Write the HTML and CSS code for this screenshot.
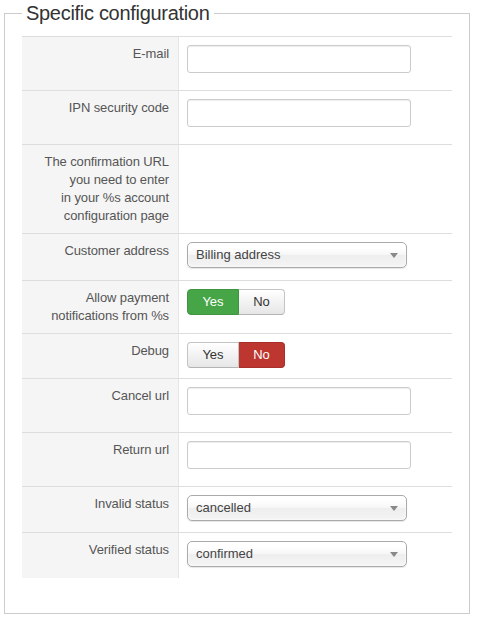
FILE: index.html
```html
<!DOCTYPE html>
<html>
<head>
<meta charset="utf-8">
<link rel="stylesheet" href="styles.css">
</head>
<body>
<fieldset class="config">
  <legend class="config-legend">Specific configuration</legend>
  <div class="form-table">
    <div class="row">
      <div class="label">E-mail</div>
      <div class="value"><input class="text-input" type="text"></div>
    </div>
    <div class="row">
      <div class="label">IPN security code</div>
      <div class="value"><input class="text-input" type="text"></div>
    </div>
    <div class="row">
      <div class="label">The confirmation URL<br>you need to enter<br>in your %s account<br>configuration page</div>
      <div class="value"></div>
    </div>
    <div class="row">
      <div class="label">Customer address</div>
      <div class="value"><div class="select">Billing address<span class="arrow"></span></div></div>
    </div>
    <div class="row">
      <div class="label">Allow payment<br>notifications from %s</div>
      <div class="value">
        <div class="toggle">
          <span class="btn btn-yes active-yes">Yes</span><span class="btn btn-no">No</span>
        </div>
      </div>
    </div>
    <div class="row">
      <div class="label">Debug</div>
      <div class="value">
        <div class="toggle">
          <span class="btn btn-yes">Yes</span><span class="btn btn-no active-no">No</span>
        </div>
      </div>
    </div>
    <div class="row">
      <div class="label">Cancel url</div>
      <div class="value"><input class="text-input" type="text"></div>
    </div>
    <div class="row">
      <div class="label">Return url</div>
      <div class="value"><input class="text-input" type="text"></div>
    </div>
    <div class="row">
      <div class="label">Invalid status</div>
      <div class="value"><div class="select select-status">cancelled<span class="arrow"></span></div></div>
    </div>
    <div class="row">
      <div class="label">Verified status</div>
      <div class="value"><div class="select select-status">confirmed<span class="arrow"></span></div></div>
    </div>
  </div>
</fieldset>
</body>
</html>
```
FILE: styles.css
```css
html, body {
  margin: 0;
  padding: 0;
  background: #fff;
}
body {
  font-family: "Liberation Sans", Arial, sans-serif;
  font-size: 13px;
  line-height: 18px;
  color: #333;
}
.config {
  margin: 0 0 0 4px;
  width: 466px;
  box-sizing: border-box;
  border: 1px solid #cccccc;
  padding: 10px 17px 35px 17px;
}
.config-legend {
  font-size: 20px;
  letter-spacing: -0.3px;
  line-height: 26px;
  color: #333;
  padding: 0 4px;
}
.form-table {
  width: 430px;
}
.row {
  display: grid;
  grid-template-columns: 157px 273px;
  border-top: 1px solid #dddddd;
}
.label {
  background: #f5f5f5;
  border-right: 1px solid #e6e6e6;
  padding: 8px 9px 8px 8px;
  text-align: right;
  color: #555;
  letter-spacing: -0.1px;
}
.value {
  padding: 8px 8px 8px 8px;
}
.text-input {
  display: block;
  box-sizing: border-box;
  width: 224px;
  height: 28px;
  margin: 0 0 9px 0;
  padding: 4px 6px;
  border: 1px solid #cccccc;
  border-radius: 3px;
  box-shadow: inset 0 1px 1px rgba(0,0,0,0.075);
  background: #fff;
  font-family: inherit;
  font-size: 13px;
}
.select {
  position: relative;
  box-sizing: border-box;
  width: 220px;
  height: 26px;
  margin-bottom: 4px;
  padding: 0 0 0 8px;
  border: 1px solid #aaaaaa;
  border-radius: 5px;
  background: linear-gradient(#ffffff 20%, #f6f6f6 50%, #eeeeee 52%, #f4f4f4 100%);
  box-shadow: 0 0 3px #fff inset, 0 1px 1px rgba(0,0,0,0.1);
  line-height: 24px;
  color: #444;
}
.select-status {
  margin-bottom: 3px;
}
.arrow {
  position: absolute;
  right: 8px;
  top: 10px;
  width: 0;
  height: 0;
  border-left: 4px solid transparent;
  border-right: 4px solid transparent;
  border-top: 5px solid #888;
}
.toggle {
  display: flex;
  margin-bottom: 2px;
}
.btn {
  box-sizing: border-box;
  height: 26px;
  line-height: 24px;
  text-align: center;
  border: 1px solid #c4c4c4;
  border-bottom-color: #b3b3b3;
  background: linear-gradient(#ffffff, #e6e6e6);
  color: #333;
  font-size: 13px;
}
.btn-yes {
  width: 52px;
  border-radius: 4px 0 0 4px;
}
.btn-no {
  width: 46px;
  border-left: 0;
  border-radius: 0 4px 4px 0;
}
.active-yes {
  background: #46a546;
  border-color: #3f953f;
  color: #fff;
}
.active-no {
  background: #bd362f;
  border-color: #a9302a;
  color: #fff;
}
```
